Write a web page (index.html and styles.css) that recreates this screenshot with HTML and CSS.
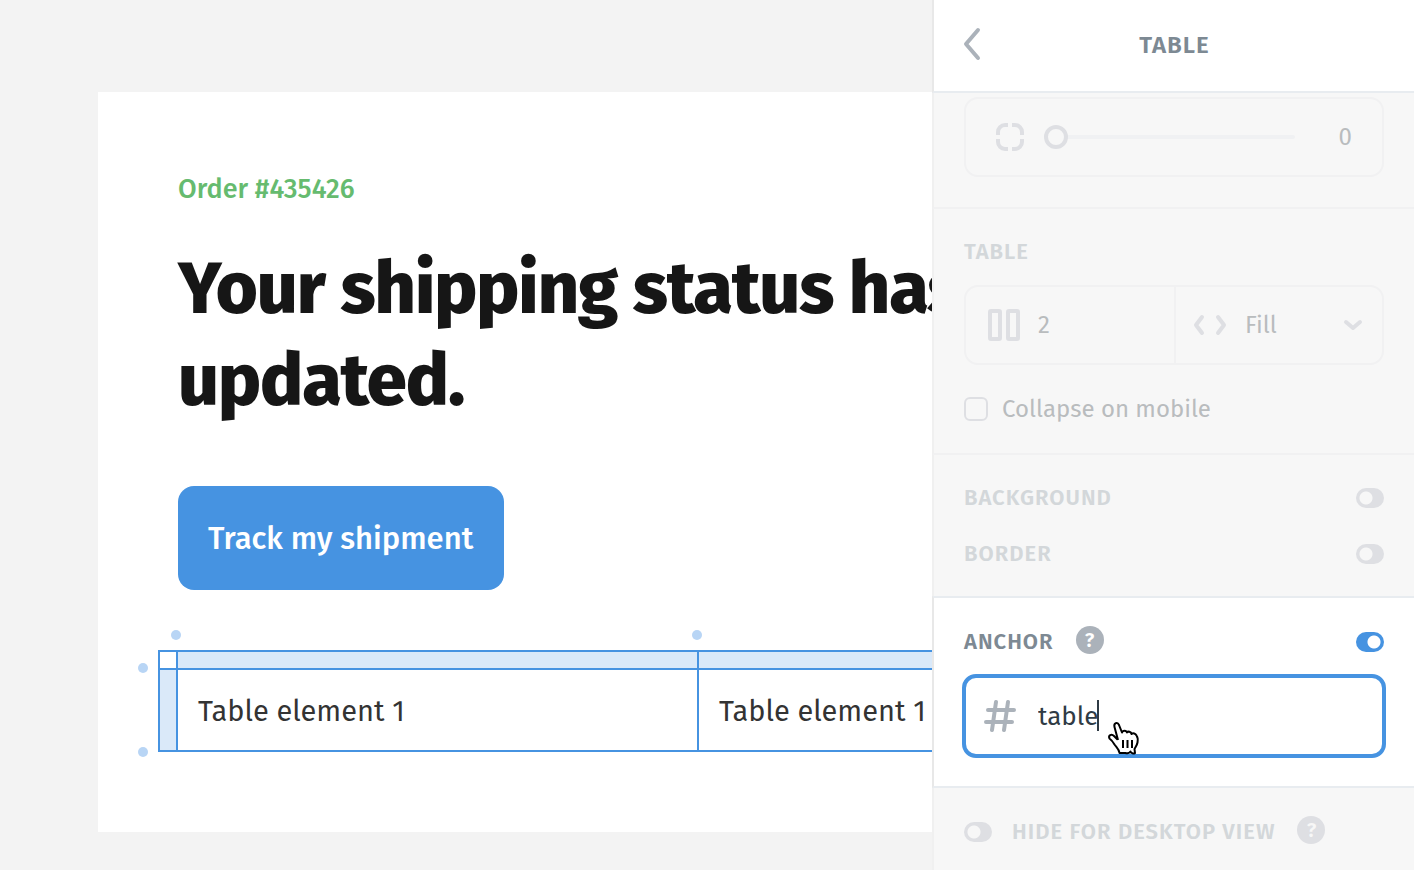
FILE: index.html
```html
<!DOCTYPE html>
<html lang="en">
<head>
    <meta charset="UTF-8">
    <title>Table settings</title>
    <link rel="stylesheet" href="styles.css">
</head>
<body>
    <div class="editor">
        <main class="canvas">
            <div class="email">
                <p class="order">Order #435426</p>
                <h1 class="title">Your shipping status has been updated.</h1>
                <button type="button" class="track">Track my shipment</button>
                <div class="table-wrap">
                    <table class="table">
                        <colgroup>
                            <col class="col-gutter">
                            <col>
                            <col>
                        </colgroup>
                        <tr class="gutter-row">
                            <td></td>
                            <td class="gutter"></td>
                            <td class="gutter"></td>
                        </tr>
                        <tr class="row">
                            <td class="gutter"></td>
                            <td class="cell">Table element 1</td>
                            <td class="cell">Table element 1</td>
                        </tr>
                    </table>
                    <!-- insert row / column handles -->
                    <span class="dot dot-col1"></span>
                    <span class="dot dot-col2"></span>
                    <span class="dot dot-row1"></span>
                    <span class="dot dot-row2"></span>
                </div>
            </div>
        </main>

        <aside class="panel">
            <header class="panel-header">
                <button type="button" class="back" aria-label="Back">
                    <svg width="18" height="34" viewBox="0 0 18 34"><path d="M15 3L3 17l12 14"/></svg>
                </button>
                <h2 class="panel-title">TABLE</h2>
            </header>

            <section class="section section-radius">
                <div class="box radius">
                    <svg class="icon" width="28" height="28" viewBox="0 0 28 28"><path d="M2 12V9a7 7 0 0 1 7-7h3M16 2h3a7 7 0 0 1 7 7v3M26 16v3a7 7 0 0 1-7 7h-3M12 26H9a7 7 0 0 1-7-7v-3"/></svg>
                    <input type="range" class="slider" id="radius" min="0" max="40" value="0" aria-label="Radius">
                    <output class="radius-value" for="radius">0</output>
                </div>
            </section>

            <section class="section section-table">
                <h3 class="label">TABLE</h3>
                <div class="box fields">
                    <label class="field field-cols">
                        <svg class="icon" width="32" height="32" viewBox="0 0 32 32"><rect x="2" y="2" width="10" height="28" rx="1"/><rect x="20" y="2" width="10" height="28" rx="1"/></svg>
                        <input type="text" class="field-input" value="2" aria-label="Columns">
                    </label>
                    <label class="field field-size">
                        <svg class="icon round" width="34" height="32" viewBox="0 0 34 32"><path d="M9 8l-6 8 6 8M25 8l6 8-6 8"/></svg>
                        <select class="field-input" aria-label="Width">
                            <option>Fill</option>
                            <option>Fixed</option>
                        </select>
                        <svg class="icon round" width="20" height="12" viewBox="0 0 20 12"><path d="M3 3l7 6 7-6"/></svg>
                    </label>
                </div>
                <label class="check">
                    <input type="checkbox" class="checkbox">
                    <span>Collapse on mobile</span>
                </label>
            </section>

            <section class="section section-toggles">
                <label class="toggle-row">
                    <span class="label">BACKGROUND</span>
                    <input type="checkbox" class="toggle">
                </label>
                <label class="toggle-row">
                    <span class="label">BORDER</span>
                    <input type="checkbox" class="toggle">
                </label>
            </section>

            <section class="section section-anchor">
                <div class="toggle-row">
                    <label class="label" for="anchor-on">ANCHOR</label>
                    <button type="button" class="help" aria-label="About anchors">?</button>
                    <input type="checkbox" class="toggle" id="anchor-on" checked>
                </div>
                <div class="anchor-box">
                    <svg class="hash" width="32" height="32" viewBox="0 0 32 32"><path d="M12 2L8 30M24 2l-4 28M4 10h26M2 22h26"/></svg>
                    <input type="text" class="anchor-input" value="table" aria-label="Anchor name">
                    <span class="caret"></span>
                    <svg class="hand" width="36" height="36" viewBox="0 0 36 36">
                        <path d="M12 20L8.500 7C7.500 3 11.500 1.500 13 5l3 7.500c.5-2.500 4.500-2.500 5 0 1-1.500 4-1 4.500 1.500 1.500-1.500 4-.5 5 1.500 1.500 2 1.500 4 1 7-.5 3-2.500 5-3 6.500l.5 4c-1.500 .8-4 .5-4.500-1.500-1 1.500-3.500 2-5 1.500h-6c-.5-4-3-5.500-5-8.500-1.500-2.500-3-4.500-5-6-1.500-3 2-5 4.500-2.500l3.500 3.500"/>
                        <path d="M17 20v8M21.500 20v8M26 20v8"/>
                    </svg>
                </div>
            </section>

            <section class="section section-hide">
                <div class="hide-row">
                    <input type="checkbox" class="toggle" id="hide-desktop">
                    <label class="label" for="hide-desktop">HIDE FOR DESKTOP VIEW</label>
                    <button type="button" class="help" aria-label="About hiding">?</button>
                </div>
            </section>
        </aside>
    </div>
</body>
</html>
```
FILE: styles.css
```css
* {
    box-sizing: border-box;
}
body {
    margin: 0;
    font-family: "Fira Sans", "Noto Sans CJK SC", "Noto Sans", sans-serif;
    background: #f3f3f3;
}
h1, h2, h3, p {
    margin: 0;
}
button, input, select {
    font: inherit;
    margin: 0;
    padding: 0;
    border: 0;
    background: none;
}
svg {
    display: block;
    flex: none;
    fill: none;
}
.editor {
    display: flex;
    height: 100vh;
    overflow: hidden;
}

/* canvas */
.canvas {
    flex: 1;
    min-width: 0;
    overflow: hidden;
    padding: 92px 0 38px 98px;
}
.email {
    width: 1200px;
    padding: 80px;
    background: #fff;
}
.order {
    font-size: 27px;
    line-height: 34px;
    font-weight: 500;
    color: #66bb6f;
}
.title {
    margin-top: 37px;
    font-size: 72px;
    line-height: 92px;
    font-weight: 800;
    letter-spacing: -1px;
    color: #161616;
}
.track {
    display: block;
    height: 104px;
    margin-top: 59px;
    padding: 0 31px 0 30px;
    border-radius: 16px;
    background: #4693e1;
    color: #fff;
    font-size: 31px;
    font-weight: 500;
}
.table-wrap {
    position: relative;
    width: 1062px;
    margin: 60px 0 0 -20px;
}
.table {
    width: 100%;
    table-layout: fixed;
    border-collapse: collapse;
}
.table td {
    padding: 0;
    border: 2px solid #4693e1;
}
.col-gutter {
    width: 18px;
}
.gutter-row {
    height: 18px;
}
.row {
    height: 82px;
}
.table .gutter {
    background: #dae9f9;
}
.table .cell {
    padding: 4px 20px 0;
    font-size: 29px;
    line-height: 40px;
    color: #333;
}
.dot {
    position: absolute;
    width: 10px;
    height: 10px;
    border-radius: 50%;
    background: #b8d5f5;
}
.dot-col1 {
    left: 13px;
    top: -20px;
}
.dot-col2 {
    left: 534px;
    top: -20px;
}
.dot-row1 {
    left: -20px;
    top: 13px;
}
.dot-row2 {
    left: -20px;
    bottom: -5px;
}

/* settings panel */
.panel {
    display: flex;
    flex-direction: column;
    flex: none;
    width: 482px;
    background: #f7f7f7;
}
.panel-header {
    display: flex;
    align-items: center;
    flex: none;
    height: 93px;
    padding: 0 30px 3px 29px;
    border-left: 2px solid #e8e8e8;
    border-bottom: 2px solid #e8ecf0;
    background: #fff;
}
.back {
    width: 20px;
}
.back svg {
    stroke: #abb2ba;
    stroke-width: 4;
    stroke-linecap: round;
    stroke-linejoin: round;
}
.panel-title {
    flex: 1;
    padding: 2px 18px 0 0;
    text-align: center;
    font-size: 24px;
    line-height: 32px;
    font-weight: 600;
    letter-spacing: 1px;
    color: #7d8993;
}
.section {
    flex: none;
    padding: 30px;
    border-left: 2px solid #f0f0f0;
    border-bottom: 2px solid #f1f1f2;
}
.section-radius {
    padding-top: 4px;
}
.section-table {
    padding-top: 31px;
    padding-bottom: 32px;
}
.label {
    font-size: 22px;
    line-height: 24px;
    font-weight: 600;
    letter-spacing: 1px;
    color: #d3d7da;
}
.box {
    display: flex;
    align-items: center;
    height: 80px;
    border: 2px solid #f1f1f2;
    border-radius: 14px;
    font-size: 24px;
    color: #b9bcbe;
}
.icon {
    stroke: #dedfe3;
    stroke-width: 4;
}
.round {
    stroke-linecap: round;
    stroke-linejoin: round;
}
.radius {
    padding: 0 30px;
}
.slider {
    flex: 1;
    min-width: 0;
    height: 24px;
    margin-left: 20px;
    appearance: none;
}
.slider::-webkit-slider-runnable-track {
    height: 4px;
    border-radius: 2px;
    background: #f0f1f3;
}
.slider::-webkit-slider-thumb {
    appearance: none;
    width: 24px;
    height: 24px;
    margin-top: -10px;
    border: 4px solid #dedfe3;
    border-radius: 50%;
    background: #f7f7f7;
}
.radius-value {
    width: 57px;
    text-align: right;
}
.fields {
    display: grid;
    grid-template-columns: 1fr 1fr;
    margin-top: 21px;
}
.field {
    display: flex;
    align-items: center;
    min-width: 0;
    height: 76px;
    gap: 18px;
}
.field-cols {
    padding-left: 22px;
}
.field-size {
    padding: 0 19px 0 17px;
    border-left: 2px solid #f1f1f2;
}
.field-input {
    flex: 1;
    min-width: 0;
    height: 40px;
    appearance: none;
    color: #b9bcbe;
}
.check {
    display: flex;
    align-items: center;
    gap: 14px;
    height: 24px;
    margin-top: 32px;
    font-size: 24px;
    line-height: 24px;
    color: #b9bcbe;
}
.checkbox {
    width: 24px;
    height: 24px;
    appearance: none;
    border: 2px solid #dedfe3;
    border-radius: 6px;
}
.section-toggles {
    display: flex;
    flex-direction: column;
    gap: 30px;
    padding-bottom: 29px;
    border-bottom: 0;
}
.toggle-row {
    display: flex;
    align-items: center;
    height: 26px;
}
.toggle {
    width: 28px;
    height: 20px;
    appearance: none;
    border-radius: 10px;
    background: radial-gradient(circle at 10px 10px, #f7f7f7 6px, #dedfe3 7px);
}
.toggle-row .toggle {
    margin-left: auto;
}
.toggle:checked {
    background: radial-gradient(circle at 18px 10px, #fff 6px, #4693e1 7px);
}
.help {
    width: 28px;
    height: 28px;
    margin: 0 0 4px 22px;
    border-radius: 50%;
    background: #dedfe3;
    color: #f7f7f7;
    font-size: 20px;
    line-height: 28px;
    font-weight: 600;
    text-align: center;
}
.section-anchor {
    padding-bottom: 28px;
    border-top: 2px solid #e8ecf0;
    border-bottom-color: #e8ecf0;
    border-left-color: #e8e8e8;
    background: #fff;
}
.section-anchor .toggle-row {
    height: 28px;
}
.section-anchor .label {
    color: #7d8993;
}
.section-anchor .help {
    background: #abb2ba;
    color: #fff;
}
.anchor-box {
    position: relative;
    display: flex;
    align-items: center;
    gap: 22px;
    height: 84px;
    margin: 18px -2px 0;
    padding: 0 18px;
    border: 4px solid #4693e1;
    border-radius: 14px;
}
.hash {
    stroke: #abb2ba;
    stroke-width: 4;
    stroke-linecap: round;
}
.anchor-input {
    flex: 1;
    min-width: 0;
    height: 40px;
    outline: none;
    font-size: 26px;
    color: #2f3b45;
}
.caret {
    position: absolute;
    left: 131px;
    top: 22px;
    width: 2px;
    height: 31px;
    background: #2f3b45;
}
.hand {
    position: absolute;
    left: 140px;
    top: 42px;
    fill: #fff;
    stroke: #000;
    stroke-width: 2;
    stroke-linejoin: round;
}
.section-hide {
    flex: 1;
    border-bottom: 0;
}
.hide-row {
    display: flex;
    align-items: center;
    height: 28px;
}
.hide-row .label {
    margin-left: 20px;
}
```
